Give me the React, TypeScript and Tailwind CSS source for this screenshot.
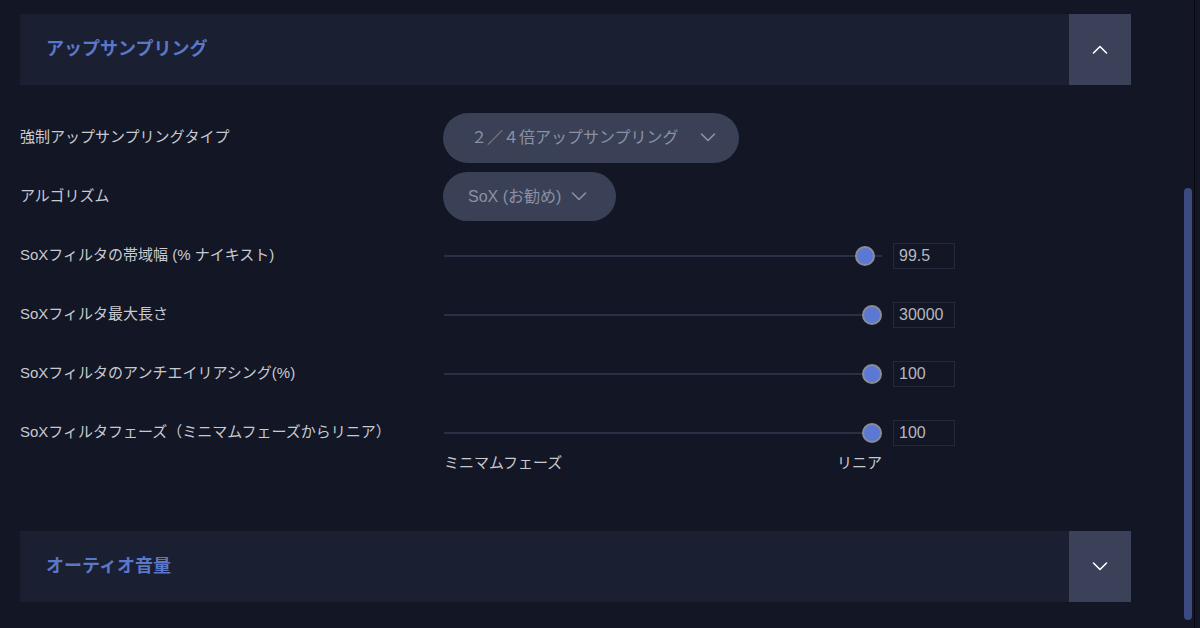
import React from 'react';

const FONT = { fontFamily: '"Liberation Sans", "Noto Sans CJK JP", sans-serif' };

function Chevron({ up = false, className = '' }: { up?: boolean; className?: string }) {
  return (
    <svg width="16" height="9" viewBox="0 0 16 9" fill="none" className={className}>
      <path
        d={up ? 'M1.5 8 8 1.5 14.5 8' : 'M1.5 1 8 7.5 14.5 1'}
        stroke="currentColor"
        strokeWidth="1.6"
        strokeLinecap="round"
        strokeLinejoin="round"
      />
    </svg>
  );
}

function SectionHeader({ title, open }: { title: string; open: boolean }) {
  return (
    <div className="flex h-[71px] w-[1111px] bg-[#1b1f32]">
      <div className="flex flex-1 items-center pl-[26px] text-[18px] font-bold text-[#5a77c9]">{title}</div>
      <div className="flex w-[62px] items-center justify-center bg-[#3b4159] text-white">
        <Chevron up={open} />
      </div>
    </div>
  );
}

function Row({ label, children }: { label: string; children: React.ReactNode }) {
  return (
    <div className="flex h-[59px] items-center">
      <div className="w-[423px] text-[15px] text-[#c9cad0]">{label}</div>
      {children}
    </div>
  );
}

function Slider({ pos, value }: { pos: number; value: string }) {
  // pos: thumb centre, px from the left of the track
  return (
    <div className="flex items-center">
      <div className="relative ml-[1px] h-[2px] w-[438px] bg-[#293045]">
        <div
          className="absolute top-1/2 h-[20px] w-[20px] -translate-x-1/2 -translate-y-1/2 rounded-full border-2 border-[#8b8d96] bg-[#5b78d4]"
          style={{ left: pos }}
        />
      </div>
      <div className="ml-[11px] flex h-[26px] w-[62px] items-center border border-[#242a3b] pl-[5px] text-[16px] text-[#b6b7c0]">
        {value}
      </div>
    </div>
  );
}

export default function App() {
  return (
    <div className="flex h-[628px] w-[1200px] overflow-hidden bg-[#121625]" style={FONT}>
      <div className="w-[1131px] pl-[20px] pt-[14px]">
        <SectionHeader title="アップサンプリング" open />

        <div className="mt-[23px]">
          <Row label="強制アップサンプリングタイプ">
            <button className="flex h-[50px] w-[296px] items-center rounded-full bg-[#3a4157] pl-[28px] text-[16px] text-[#8b90a5]">
              <span>２／４倍アップサンプリング</span>
              <Chevron className="ml-[21px] text-[#8b90a5]" />
            </button>
          </Row>
          <Row label="アルゴリズム">
            <button className="flex h-[49px] w-[173px] items-center rounded-full bg-[#3a4157] pl-[25px] text-[16px] text-[#8b90a5]">
              <span>SoX (お勧め)</span>
              <Chevron className="ml-[10px] text-[#8b90a5]" />
            </button>
          </Row>
          <Row label="SoXフィルタの帯域幅 (% ナイキスト)">
            <Slider pos={421} value="99.5" />
          </Row>
          <Row label="SoXフィルタ最大長さ">
            <Slider pos={428} value="30000" />
          </Row>
          <Row label="SoXフィルタのアンチエイリアシング(%)">
            <Slider pos={428} value="100" />
          </Row>
          <Row label="SoXフィルタフェーズ（ミニマムフェーズからリニア）">
            <Slider pos={428} value="100" />
          </Row>
          <div className="-mt-[9px] ml-[424px] flex h-[20px] w-[438px] items-center justify-between text-[15px] text-[#c9cad0]">
            <span>ミニマムフェーズ</span>
            <span>リニア</span>
          </div>
        </div>

        <div className="mt-[58px]">
          <SectionHeader title="オーティオ音量" open={false} />
        </div>
      </div>

      <div className="ml-[53px] w-[8px] pt-[188px]">
        <div className="h-[432px] w-[8px] rounded-full bg-[#3b4a80]" />
      </div>
      <div className="ml-[2px] h-full w-[1px] bg-[#08090f]" />
    </div>
  );
}
